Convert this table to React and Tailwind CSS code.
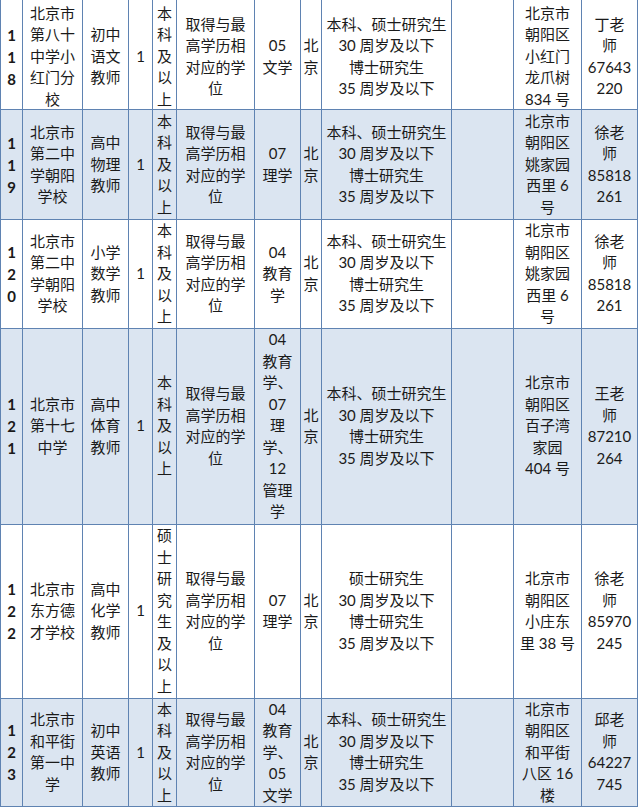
const AGE_A = ["本科、硕士研究生", "30 周岁及以下", "博士研究生", "35 周岁及以下"];
const AGE_B = ["硕士研究生", "30 周岁及以下", "博士研究生", "35 周岁及以下"];
const DEGREE = ["取得与最", "高学历相", "对应的学", "位"];
const BK = ["本", "科", "及", "以", "上"];

const rows = [
  {
    no: "118", h: "h-[112px]", blue: false, shift: "-mb-[6px]",
    school: ["北京市", "第八十", "中学小", "红门分", "校"],
    job: ["初中", "语文", "教师"], edu: BK, major: ["05", "文学"], age: AGE_A,
    addr: ["北京市", "朝阳区", "小红门", "龙爪树", "834 号"],
    contact: ["丁老", "师", "67643", "220"],
  },
  {
    no: "119", h: "h-[110px]", blue: true, shift: "",
    school: ["北京市", "第二中", "学朝阳", "学校"],
    job: ["高中", "物理", "教师"], edu: BK, major: ["07", "理学"], age: AGE_A,
    addr: ["北京市", "朝阳区", "姚家园", "西里 6", "号"],
    contact: ["徐老", "师", "85818", "261"],
  },
  {
    no: "120", h: "h-[108px]", blue: false, shift: "",
    school: ["北京市", "第二中", "学朝阳", "学校"],
    job: ["小学", "数学", "教师"], edu: BK, major: ["04", "教育", "学"], age: AGE_A,
    addr: ["北京市", "朝阳区", "姚家园", "西里 6", "号"],
    contact: ["徐老", "师", "85818", "261"],
  },
  {
    no: "121", h: "h-[196px]", blue: true, shift: "",
    school: ["北京市", "第十七", "中学"],
    job: ["高中", "体育", "教师"], edu: BK,
    major: ["04", "教育", "学、", "07", "理", "学、", "12", "管理", "学"], age: AGE_A,
    addr: ["北京市", "朝阳区", "百子湾", "家园", "404 号"],
    contact: ["王老", "师", "87210", "264"],
  },
  {
    no: "122", h: "h-[174px]", blue: false, shift: "",
    school: ["北京市", "东方德", "才学校"],
    job: ["高中", "化学", "教师"], edu: ["硕", "士", "研", "究", "生", "及", "以", "上"],
    major: ["07", "理学"], age: AGE_B,
    addr: ["北京市", "朝阳区", "小庄东", "里 38 号"],
    contact: ["徐老", "师", "85970", "245"],
  },
  {
    no: "123", h: "h-[107px]", blue: true, shift: "",
    school: ["北京市", "和平街", "第一中", "学"],
    job: ["初中", "英语", "教师"], edu: BK, major: ["04", "教育", "学、", "05", "文学"], age: AGE_A,
    addr: ["北京市", "朝阳区", "和平街", "八区 16", "楼"],
    contact: ["邱老", "师", "64227", "745"],
  },
];

function Cell({ lines, shift = "", className = "" }) {
  return (
    <td className={`border-[1.5px] border-[#5f83b2] p-0 text-center align-middle whitespace-nowrap overflow-hidden ${className}`}>
      <div className={shift}>
        {lines.map((l, i) => (
          <div key={i}>{l}</div>
        ))}
      </div>
    </td>
  );
}

export default function App() {
  return (
    <div className="w-[640px] h-[807px] overflow-hidden bg-white">
      <table className="-mt-[3px] w-[637px] table-fixed border-collapse text-[15px] leading-[21.5px] text-[#1a1a1a] font-['Lato','Noto_Sans_CJK_SC',sans-serif]">
        <colgroup>
          <col className="w-[22px]" />
          <col className="w-[60px]" />
          <col className="w-[46px]" />
          <col className="w-[24px]" />
          <col className="w-[24px]" />
          <col className="w-[78px]" />
          <col className="w-[46px]" />
          <col className="w-[21px]" />
          <col className="w-[130px]" />
          <col className="w-[62px]" />
          <col className="w-[68px]" />
          <col className="w-[56px]" />
        </colgroup>
        <tbody>
          {rows.map((r) => (
            <tr key={r.no} className={`${r.h} ${r.blue ? "bg-[#dbe5f1]" : "bg-white"}`}>
              <Cell lines={r.no.split("")} shift={r.shift} className="font-bold leading-[22px]" />
              <Cell lines={r.school} shift={r.shift} />
              <Cell lines={r.job} shift={r.shift} />
              <Cell lines={["1"]} shift={r.shift} />
              <Cell lines={r.edu} shift={r.shift} />
              <Cell lines={DEGREE} shift={r.shift} />
              <Cell lines={r.major} shift={r.shift} />
              <Cell lines={["北", "京"]} shift={r.shift} />
              <Cell lines={r.age} shift={r.shift} />
              <Cell lines={[]} shift={r.shift} />
              <Cell lines={r.addr} shift={r.shift} />
              <Cell lines={r.contact} shift={r.shift} />
            </tr>
          ))}
        </tbody>
      </table>
    </div>
  );
}
